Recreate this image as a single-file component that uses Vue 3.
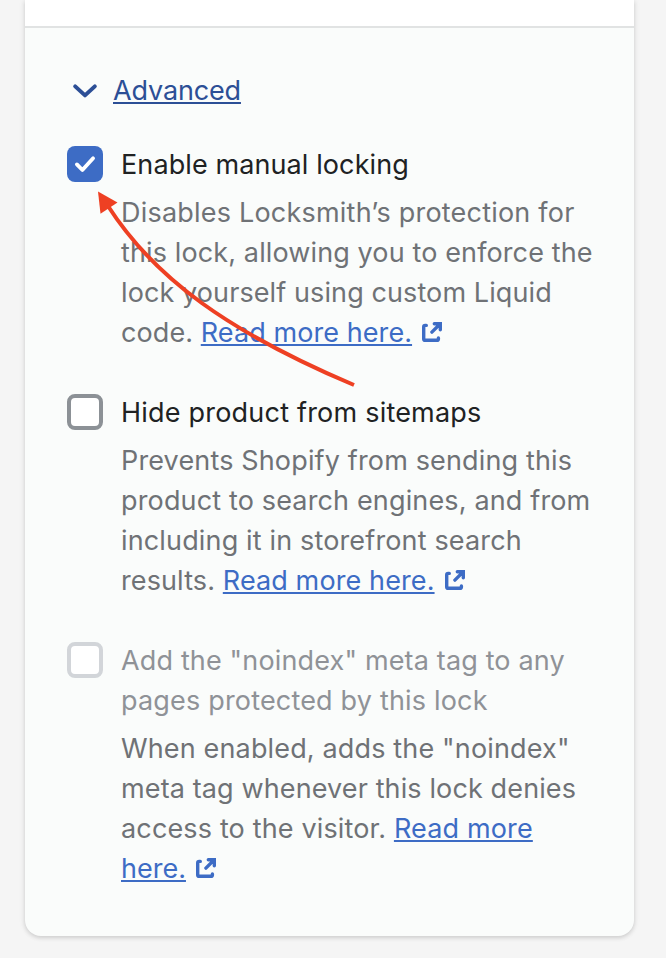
<script setup>
const options = [
  {
    label: [['Enable manual locking', 'a1']],
    state: 'checked',
    lines: [
      ['Disables Locksmith’s protection for', 'b1'],
      ['this lock, allowing you to enforce the', 'b2'],
      ['lock yourself using custom Liquid', 'b3'],
      ['code. ', 'b4', 'Read more here.', true],
    ],
  },
  {
    label: [['Hide product from sitemaps', 'a2']],
    state: 'empty',
    lines: [
      ['Prevents Shopify from sending this', 'c1'],
      ['product to search engines, and from', 'c2'],
      ['including it in storefront search', 'c3'],
      ['results. ', 'c4', 'Read more here.', true],
    ],
  },
  {
    label: [['Add the "noindex" meta tag to any', 'a3'], ['pages protected by this lock', 'a4']],
    state: 'disabled',
    lines: [
      ['When enabled, adds the "noindex"', 'd1'],
      ['meta tag whenever this lock denies', 'd2'],
      ['access to the visitor. ', 'd3', 'Read more', false],
      ['', 'd4', 'here.', true],
    ],
  },
]
</script>

<template>
  <main class="page">
    <section class="card">
      <div class="card-top"></div>
      <div class="content">
        <div class="disclosure">
          <svg class="chevron" viewBox="0 0 28 20">
            <path d="M4.2 5.400 14 14.400 23.8 5.400" />
          </svg>
          <a class="advanced">Advanced</a>
        </div>
        <div v-for="option in options" :key="option.state" class="option">
          <span class="box" :class="option.state">
            <svg v-if="option.state === 'checked'" viewBox="0 0 36 36">
              <path d="M9.9 18.4 15.4 24 26.1 12.3" />
            </svg>
          </span>
          <div class="copy">
            <div class="label" :class="option.state">
              <div v-for="line in option.label" :key="line[1]" class="line" :class="line[1]">{{ line[0] }}</div>
            </div>
            <div class="help">
              <div v-for="line in option.lines" :key="line[1]" class="line" :class="line[1]"><span>{{ line[0] }}</span><a v-if="line[2]">{{ line[2] }}</a><svg v-if="line[3]" class="external" viewBox="0 0 20 20">
                  <path d="M4.3 3.4H3.2Q1.7 3.4 1.7 4.900V16.9Q1.7 18.3 3.2 18.3H14.9Q16.4 18.3 16.4 16.9V15.900" />
                  <path d="M12.300 1.700H18.300V7.700M18 2 9.900 10.100" />
                </svg></div>
            </div>
          </div>
        </div>
      </div>
    </section>
    <svg class="arrow" viewBox="0 0 666 958">
      <path class="shaft" d="M108 206C155 279 229 332 354 385" />
      <path class="head" d="M98 191.500 117.500 202.500 100.500 213.800Z" />
    </svg>
  </main>
</template>

<style>
body {
  background: #f5f5f5;
}
</style>

<style scoped>
.page {
  position: relative;
  box-sizing: border-box;
  height: 958px;
  padding: 0 32px 22px 25px;
  background: #f5f5f5;
  overflow: hidden;
  font-family: Inter, "Liberation Sans", sans-serif;
  font-size: 27px;
  line-height: 40px;
}
.card {
  box-sizing: border-box;
  height: 936px;
  border-radius: 0 0 16px 16px;
  background: #fafcfb;
  box-shadow: 0 0 7px rgba(23, 24, 24, 0.08), 0 2px 4px rgba(0, 0, 0, 0.12);
}
.card-top {
  height: 26px;
  background: #fff;
  border-bottom: 2px solid #e1e3e3;
}
.content {
  padding: 43px 0 0 42px;
}
.disclosure {
  display: flex;
  align-items: center;
  height: 40px;
  margin-bottom: 34px;
  gap: 14px;
  padding-left: 4px;
}
.chevron {
  width: 28px;
  height: 20px;
  fill: none;
  stroke: #2c4f96;
  stroke-width: 4;
  stroke-linecap: round;
  stroke-linejoin: round;
}
.option {
  display: flex;
  gap: 18px;
  margin-bottom: 40px;
}
.box {
  box-sizing: border-box;
  flex: none;
  width: 36px;
  height: 36px;
  margin-top: 1px;
  border: 4px solid #8c9196;
  border-radius: 8px;
  background: #fff;
}
.box.checked {
  border: 0;
  background: #3d6cc5;
}
.box.disabled {
  border-color: #d2d5d9;
}
.box svg {
  display: block;
  fill: none;
  stroke: #fff;
  stroke-width: 3.8;
  stroke-linecap: round;
  stroke-linejoin: round;
}
.label {
  margin-bottom: 8px;
  color: #202223;
}
.label.disabled {
  color: #8f9297;
}
.help {
  color: #6f7276;
}
.line {
  height: 40px;
  white-space: pre;
  letter-spacing: 0.15px;
}
.a1, .b3 { letter-spacing: 0.1px; }
.b4 { letter-spacing: 0.08px; }
.c4 { letter-spacing: 0.11px; }
.b1, .a2 { letter-spacing: 0.21px; }
.b2, .d2 { letter-spacing: 0.12px; }
.a4 { letter-spacing: 0.18px; }
.d4 { letter-spacing: 0; }
a {
  color: #3d6cc5;
  text-decoration: underline;
  text-decoration-thickness: 2px;
  text-underline-offset: 2px;
  text-decoration-skip-ink: none;
}
.advanced {
  color: #2c4f96;
  letter-spacing: -0.15px;
}
.external {
  width: 20px;
  height: 20px;
  margin-left: 10px;
  vertical-align: 0;
  fill: none;
  stroke: #3d6cc5;
  stroke-width: 3.4;
  stroke-linecap: round;
}
.arrow {
  position: absolute;
  top: 0;
  left: 0;
  width: 666px;
  height: 958px;
  pointer-events: none;
}
.shaft {
  fill: none;
  stroke: #ee4023;
  stroke-width: 4;
}
.head {
  fill: #ee4023;
}
</style>
